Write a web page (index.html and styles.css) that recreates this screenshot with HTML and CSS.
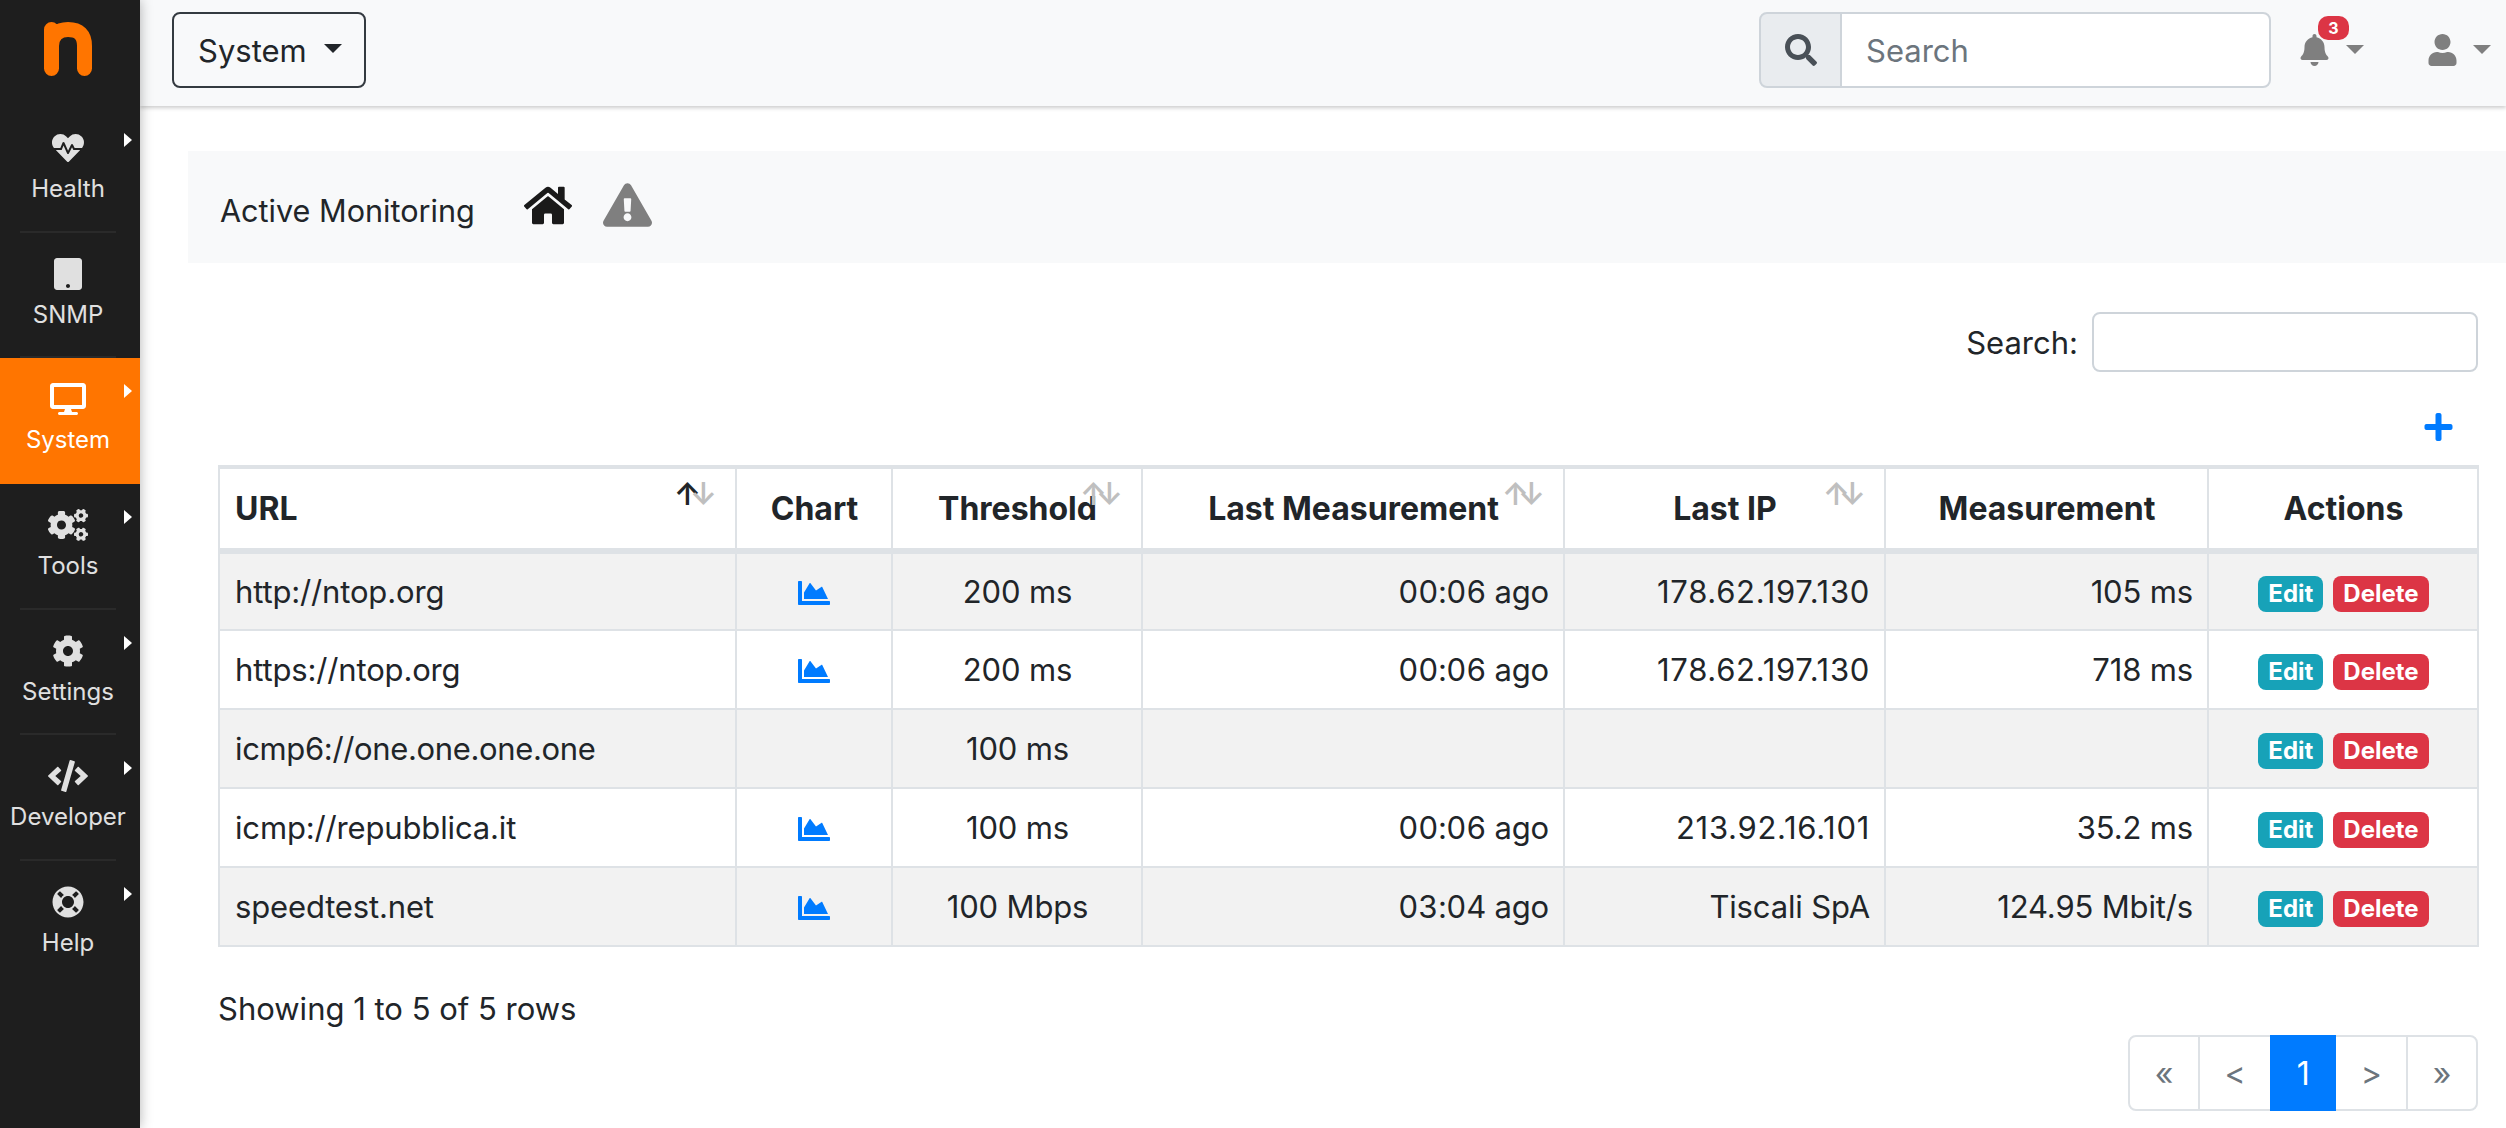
FILE: index.html
```html
<!DOCTYPE html>
<html lang="en">
<head>
<meta charset="utf-8">
<title>Active Monitoring</title>
<link rel="stylesheet" href="styles.css">
</head>
<body>
<svg class="sprite" aria-hidden="true">
  <symbol id="i-heart" viewBox="0 0 512 512"><path d="M320.2 243.8l-49.7 99.4c-6 12.1-23.4 11.7-28.9-.6l-56.9-126.3-30 71.7H60.6l182.5 186.5c7.1 7.3 18.6 7.3 25.7 0L451.4 288H342.3l-22.1-44.2zM473.7 73.9l-2.4-2.5c-51.5-52.6-135.8-52.6-187.4 0L256 100l-27.9-28.5c-51.5-52.7-135.9-52.7-187.4 0l-2.4 2.4C-10.4 123.7-12.5 203 31 256h102.4l35.9-86.2c5.4-12.9 23.6-13.2 29.4-.4l58.2 129.3 49-97.9c5.9-11.8 22.7-11.8 28.6 0l27.6 55.2H481c43.5-53 41.4-132.3-7.3-182.1z"/></symbol>
  <symbol id="i-tablet" viewBox="0 0 448 512"><path d="M400 0H48C21.5 0 0 21.5 0 48v416c0 26.5 21.5 48 48 48h352c26.5 0 48-21.5 48-48V48c0-26.5-21.5-48-48-48zM224 480c-17.7 0-32-14.3-32-32s14.3-32 32-32 32 14.3 32 32-14.3 32-32 32z"/></symbol>
  <symbol id="i-desktop" viewBox="0 0 576 512"><path d="M528 0H48C21.5 0 0 21.5 0 48v320c0 26.5 21.5 48 48 48h192l-16 48h-72c-13.3 0-24 10.7-24 24s10.7 24 24 24h272c13.3 0 24-10.7 24-24s-10.7-24-24-24h-72l-16-48h192c26.5 0 48-21.5 48-48V48c0-26.5-21.5-48-48-48zm-16 352H64V64h448v288z"/></symbol>
  <symbol id="i-cogs" viewBox="0 0 640 512"><path d="M512.1 191l-8.2 14.3c-3 5.3-9.4 7.5-15.1 5.4-11.8-4.4-22.6-10.7-32.1-18.6-4.6-3.8-5.8-10.5-2.8-15.7l8.2-14.3c-6.9-8-12.3-17.3-15.9-27.4h-16.5c-6 0-11.2-4.3-12.2-10.3-2-12-2.1-24.6 0-37.1 1-6 6.2-10.4 12.2-10.4h16.5c3.6-10.1 9-19.4 15.9-27.4l-8.2-14.3c-3-5.2-1.9-11.9 2.8-15.7 9.5-7.9 20.4-14.2 32.1-18.6 5.7-2.1 12.1.1 15.1 5.4l8.2 14.3c10.5-1.9 21.2-1.9 31.7 0L552 6.3c3-5.3 9.4-7.5 15.1-5.4 11.8 4.4 22.6 10.7 32.1 18.6 4.6 3.8 5.8 10.5 2.8 15.7l-8.2 14.3c6.9 8 12.3 17.3 15.9 27.4h16.5c6 0 11.2 4.3 12.2 10.3 2 12 2.1 24.6 0 37.1-1 6-6.2 10.4-12.2 10.4h-16.5c-3.6 10.1-9 19.4-15.9 27.4l8.2 14.3c3 5.2 1.9 11.9-2.8 15.7-9.5 7.9-20.4 14.2-32.1 18.6-5.7 2.1-12.1-.1-15.1-5.4l-8.2-14.3c-10.4 1.9-21.2 1.9-31.7 0zm-10.5-58.8c38.5 29.6 82.4-14.3 52.8-52.8-38.5-29.7-82.4 14.3-52.8 52.8zM386.3 286.1l33.7 16.8c10.1 5.8 14.5 18.1 10.5 29.1-8.9 24.2-26.4 46.4-42.6 65.8-7.4 8.9-20.2 11.1-30.3 5.3l-29.1-16.8c-16 13.7-34.6 24.6-54.9 31.7v33.6c0 11.6-8.3 21.6-19.7 23.6-24.6 4.2-50.4 4.4-75.9 0-11.5-2-20-11.9-20-23.6V418c-20.3-7.2-38.9-18-54.9-31.7L74 403c-10 5.8-22.9 3.6-30.3-5.3-16.2-19.4-33.3-41.6-42.2-65.7-4-10.9.4-23.2 10.5-29.1l33.3-16.8c-3.9-20.9-3.9-42.4 0-63.4L12 205.8c-10.1-5.8-14.6-18.1-10.5-29 8.9-24.2 26-46.4 42.2-65.8 7.4-8.9 20.2-11.1 30.3-5.3l29.1 16.8c16-13.7 34.6-24.6 54.9-31.7V57.1c0-11.5 8.2-21.5 19.6-23.5 24.6-4.2 50.5-4.4 76-.1 11.5 2 20 11.9 20 23.6v33.6c20.3 7.2 38.9 18 54.9 31.7l29.1-16.8c10-5.8 22.9-3.6 30.3 5.3 16.2 19.4 33.2 41.6 42.1 65.8 4 10.9.1 23.2-10 29.1l-33.7 16.8c3.9 21 3.9 42.5 0 63.5zm-117.6 21.1c59.2-77-28.7-164.9-105.7-105.7-59.2 77 28.7 164.9 105.7 105.7zm243.4 182.7l-8.2 14.3c-3 5.3-9.4 7.5-15.1 5.4-11.8-4.4-22.6-10.7-32.1-18.6-4.6-3.8-5.8-10.5-2.8-15.7l8.2-14.3c-6.9-8-12.3-17.3-15.9-27.4h-16.5c-6 0-11.2-4.3-12.2-10.3-2-12-2.1-24.6 0-37.1 1-6 6.2-10.4 12.2-10.4h16.5c3.6-10.1 9-19.4 15.9-27.4l-8.2-14.3c-3-5.2-1.9-11.9 2.8-15.7 9.5-7.9 20.4-14.2 32.1-18.6 5.7-2.1 12.1.1 15.1 5.4l8.2 14.3c10.5-1.9 21.2-1.9 31.7 0l8.2-14.3c3-5.3 9.4-7.5 15.1-5.4 11.8 4.4 22.6 10.7 32.1 18.6 4.6 3.8 5.8 10.5 2.8 15.7l-8.2 14.3c6.9 8 12.3 17.3 15.9 27.4h16.5c6 0 11.2 4.3 12.2 10.3 2 12 2.1 24.6 0 37.1-1 6-6.2 10.4-12.2 10.4h-16.5c-3.6 10.1-9 19.4-15.9 27.4l8.2 14.3c3 5.2 1.9 11.9-2.8 15.7-9.5 7.9-20.4 14.2-32.1 18.6-5.7 2.1-12.1-.1-15.1-5.4l-8.2-14.3c-10.4 1.9-21.2 1.9-31.7 0zM501.6 431c38.5 29.6 82.4-14.3 52.8-52.8-38.5-29.6-82.4 14.3-52.8 52.8z"/></symbol>
  <symbol id="i-cog" viewBox="0 0 512 512"><path d="M487.4 315.7l-42.6-24.6c4.3-23.2 4.3-47 0-70.2l42.6-24.6c4.9-2.8 7.1-8.6 5.5-14-11.1-35.6-30-67.8-54.7-94.6-3.8-4.1-10-5.1-14.8-2.3L380.8 110c-17.9-15.4-38.5-27.3-60.8-35.1V25.8c0-5.6-3.9-10.5-9.4-11.7-36.7-8.2-74.3-7.8-109.2 0-5.5 1.2-9.4 6.1-9.4 11.7V75c-22.2 7.9-42.8 19.8-60.8 35.1L88.7 85.5c-4.9-2.8-11-1.9-14.8 2.3-24.7 26.7-43.6 58.9-54.7 94.6-1.7 5.4.6 11.2 5.5 14L67.3 221c-4.3 23.2-4.3 47 0 70.2l-42.6 24.6c-4.9 2.8-7.1 8.6-5.5 14 11.1 35.6 30 67.8 54.7 94.6 3.8 4.1 10 5.1 14.8 2.3l42.6-24.6c17.9 15.4 38.5 27.3 60.8 35.1v49.2c0 5.6 3.9 10.5 9.4 11.7 36.7 8.2 74.3 7.8 109.2 0 5.5-1.2 9.4-6.1 9.4-11.7v-49.2c22.2-7.9 42.8-19.8 60.8-35.1l42.6 24.6c4.9 2.8 11 1.9 14.8-2.3 24.7-26.7 43.6-58.9 54.7-94.6 1.5-5.5-.7-11.3-5.6-14.1zM256 336c-44.1 0-80-35.9-80-80s35.9-80 80-80 80 35.9 80 80-35.9 80-80 80z"/></symbol>
  <symbol id="i-code" viewBox="0 0 640 512"><path d="M278.9 511.5l-61-17.7c-6.4-1.8-10-8.5-8.2-14.9L346.2 8.7c1.8-6.4 8.5-10 14.9-8.2l61 17.7c6.4 1.8 10 8.5 8.2 14.9L293.8 503.3c-1.9 6.4-8.5 10.1-14.9 8.2zm-114-112.2l43.5-46.4c4.6-4.9 4.3-12.7-.8-17.2L117 256l90.6-79.7c5.1-4.5 5.5-12.3.8-17.2l-43.5-46.4c-4.5-4.8-12.1-5.1-17-.5L3.8 247.2c-5.1 4.7-5.1 12.8 0 17.5l144.1 135.1c4.9 4.6 12.5 4.4 17-.5zm327.2.6l144.1-135.1c5.1-4.7 5.1-12.8 0-17.5L492.1 112.1c-4.8-4.5-12.4-4.3-17 .5L431.6 159c-4.6 4.9-4.3 12.7.8 17.2L523 256l-90.6 79.7c-5.1 4.5-5.5 12.3-.8 17.2l43.5 46.4c4.5 4.9 12.1 5.1 17 .6z"/></symbol>
  <symbol id="i-ring" viewBox="0 0 512 512"><path d="M256 8C119.033 8 8 119.033 8 256s111.033 248 248 248 248-111.033 248-248S392.967 8 256 8zm173.696 119.559l-63.399 63.399c-10.987-18.559-26.67-34.252-45.255-45.255l63.399-63.399a218.396 218.396 0 0 1 45.255 45.255zM256 352c-53.019 0-96-42.981-96-96s42.981-96 96-96 96 42.981 96 96-42.981 96-96 96zM127.559 82.304l63.399 63.399c-18.559 10.987-34.252 26.67-45.255 45.255l-63.399-63.399a218.372 218.372 0 0 1 45.255-45.255zM82.304 384.441l63.399-63.399c10.987 18.559 26.67 34.252 45.255 45.255l-63.399 63.399a218.396 218.396 0 0 1-45.255-45.255zm302.137 45.255l-63.399-63.399c18.559-10.987 34.252-26.67 45.255-45.255l63.399 63.399a218.403 218.403 0 0 1-45.255 45.255z"/></symbol>
  <symbol id="i-search" viewBox="0 0 512 512"><path d="M505 442.7L405.3 343c-4.5-4.5-10.6-7-17-7H372c27.6-35.3 44-79.7 44-128C416 93.1 322.9 0 208 0S0 93.1 0 208s93.1 208 208 208c48.3 0 92.7-16.4 128-44v16.3c0 6.4 2.5 12.5 7 17l99.7 99.7c9.4 9.4 24.6 9.4 33.9 0l28.3-28.3c9.4-9.4 9.4-24.6.1-34zM208 336c-70.7 0-128-57.2-128-128 0-70.7 57.2-128 128-128 70.7 0 128 57.2 128 128 0 70.7-57.2 128-128 128z"/></symbol>
  <symbol id="i-bell" viewBox="0 0 448 512"><path d="M224 512c35.32 0 63.97-28.65 63.97-64H160.03c0 35.35 28.65 64 63.97 64zm215.39-149.71c-19.32-20.76-55.47-51.99-55.47-154.29 0-77.7-54.48-139.9-127.94-155.16V32c0-17.67-14.32-32-31.98-32s-31.98 14.33-31.98 32v20.84C118.56 68.1 64.08 130.3 64.08 208c0 102.3-36.15 133.53-55.47 154.29-6 6.45-8.66 14.16-8.61 21.71.11 16.4 12.98 32 32.1 32h383.8c19.12 0 32-15.6 32.1-32 .05-7.55-2.61-15.27-8.61-21.71z"/></symbol>
  <symbol id="i-user" viewBox="0 0 448 512"><path d="M224 256c70.7 0 128-57.3 128-128S294.7 0 224 0 96 57.3 96 128s57.3 128 128 128zm89.6 32h-16.7c-22.2 10.2-46.9 16-72.9 16s-50.6-5.8-72.9-16h-16.7C60.2 288 0 348.2 0 422.4V464c0 26.5 21.5 48 48 48h352c26.5 0 48-21.5 48-48v-41.6c0-74.2-60.2-134.4-134.4-134.4z"/></symbol>
  <symbol id="i-home" viewBox="0 0 576 512"><path d="M280.37 148.26L96 300.11V464a16 16 0 0 0 16 16l112.06-.29a16 16 0 0 0 15.92-16V368a16 16 0 0 1 16-16h64a16 16 0 0 1 16 16v95.64a16 16 0 0 0 16 16.05L464 480a16 16 0 0 0 16-16V300L295.67 148.26a12.19 12.19 0 0 0-15.3 0zM571.6 251.47L488 182.56V44.05a12 12 0 0 0-12-12h-56a12 12 0 0 0-12 12v72.61L318.47 43a48 48 0 0 0-61 0L4.34 251.47a12 12 0 0 0-1.6 16.9l25.5 31A12 12 0 0 0 45.15 301l235.22-193.74a12.19 12.19 0 0 1 15.3 0L530.9 301a12 12 0 0 0 16.9-1.6l25.5-31a12 12 0 0 0-1.7-16.93z"/></symbol>
  <symbol id="i-warn" viewBox="0 0 576 512"><path d="M569.517 440.013C587.975 472.007 564.806 512 527.94 512H48.054c-36.937 0-59.999-40.055-41.577-71.987L246.423 23.985c18.467-32.009 64.72-31.951 83.154 0l239.94 416.028zM288 354c-25.405 0-46 20.595-46 46s20.595 46 46 46 46-20.595 46-46-20.595-46-46-46zm-43.673-165.346l7.418 136c.347 6.364 5.609 11.346 11.982 11.346h48.546c6.373 0 11.635-4.982 11.982-11.346l7.418-136c.375-6.874-5.098-12.654-11.982-12.654h-63.383c-6.884 0-12.356 5.78-11.981 12.654z"/></symbol>
  <symbol id="i-chart" viewBox="0 0 512 512"><path d="M500 384c6.6 0 12 5.4 12 12v40c0 6.6-5.4 12-12 12H12c-6.6 0-12-5.4-12-12V76c0-6.6 5.4-12 12-12h40c6.6 0 12 5.4 12 12v308h436zM372.7 159.5L288 216l-85.3-113.7c-5.1-6.8-15.5-6.3-19.9 1L96 248v104h384l-89.9-187.8c-3.2-6.5-11.4-8.7-17.4-4.7z"/></symbol>
  <symbol id="i-plus" viewBox="0 0 448 512"><path d="M416 208H272V64c0-17.67-14.33-32-32-32h-32c-17.67 0-32 14.33-32 32v144H32c-17.67 0-32 14.33-32 32v32c0 17.67 14.33 32 32 32h144v144c0 17.67 14.33 32 32 32h32c17.67 0 32-14.33 32-32V304h144c17.67 0 32-14.33 32-32v-32c0-17.67-14.33-32-32-32z"/></symbol>
</svg>

<div class="app">
  <nav class="sidebar">
    <div class="logo-box">
      <svg class="logo" viewBox="0 0 48 54"><path d="M7.500 7.500V46.500M7.500 24C7.500 13 14 7.500 24 7.500C35 7.500 40.500 13 40.500 24V46.500"/></svg>
    </div>
    <a class="side-item has-sub"><svg class="side-icon"><use href="#i-heart"/></svg><span class="side-label">Health</span></a>
    <a class="side-item"><svg class="side-icon"><use href="#i-tablet"/></svg><span class="side-label">SNMP</span></a>
    <a class="side-item has-sub active"><svg class="side-icon"><use href="#i-desktop"/></svg><span class="side-label">System</span></a>
    <a class="side-item has-sub"><svg class="side-icon"><use href="#i-cogs"/></svg><span class="side-label">Tools</span></a>
    <a class="side-item has-sub"><svg class="side-icon"><use href="#i-cog"/></svg><span class="side-label">Settings</span></a>
    <a class="side-item has-sub"><svg class="side-icon"><use href="#i-code"/></svg><span class="side-label">Developer</span></a>
    <a class="side-item has-sub"><svg class="side-icon"><use href="#i-ring"/></svg><span class="side-label">Help</span></a>
  </nav>

  <div class="page">
    <header class="topbar">
      <button class="iface-btn">System<span class="caret caret-dark"></span></button>
      <div class="top-right">
        <div class="search-group">
          <span class="search-addon"><svg class="search-icon"><use href="#i-search"/></svg></span>
          <input class="search-input" placeholder="Search">
        </div>
        <div class="top-icon bell-wrap">
          <svg class="bell"><use href="#i-bell"/></svg>
          <span class="bell-badge">3</span>
          <span class="caret caret-grey"></span>
        </div>
        <div class="top-icon user-wrap">
          <svg class="bell"><use href="#i-user"/></svg>
          <span class="caret caret-grey"></span>
        </div>
      </div>
    </header>

    <main class="content">
      <div class="crumb">
        <span class="crumb-title">Active Monitoring</span>
        <svg class="crumb-home"><use href="#i-home"/></svg>
        <svg class="crumb-warn"><use href="#i-warn"/></svg>
      </div>

      <div class="table-area">
        <label class="filter">Search:<input class="filter-input"></label>
        <div class="add-row"><svg class="add-icon"><use href="#i-plus"/></svg></div>

        <table class="grid">
          <colgroup>
            <col class="c-url"><col class="c-chart"><col class="c-thr"><col class="c-last"><col class="c-ip"><col class="c-meas"><col class="c-act">
          </colgroup>
          <thead>
            <tr>
              <th class="left sortable">URL<span class="arr arr-up on">↑</span><span class="arr arr-down">↓</span></th>
              <th>Chart</th>
              <th class="sortable">Threshold<span class="arr arr-up">↑</span><span class="arr arr-down">↓</span></th>
              <th class="sortable">Last Measurement<span class="arr arr-up">↑</span><span class="arr arr-down">↓</span></th>
              <th class="sortable">Last IP<span class="arr arr-up">↑</span><span class="arr arr-down">↓</span></th>
              <th>Measurement</th>
              <th>Actions</th>
            </tr>
          </thead>
          <tbody>
            <tr>
              <td class="left">http://ntop.org</td>
              <td class="center"><svg class="chart-icon"><use href="#i-chart"/></svg></td>
              <td class="center">200 ms</td>
              <td class="right time">00:06 ago</td>
              <td class="right ip">178.62.197.130</td>
              <td class="right">105 ms</td>
              <td class="center"><span class="tag tag-edit">Edit</span><span class="tag tag-del">Delete</span></td>
            </tr>
            <tr>
              <td class="left">https://ntop.org</td>
              <td class="center"><svg class="chart-icon"><use href="#i-chart"/></svg></td>
              <td class="center">200 ms</td>
              <td class="right time">00:06 ago</td>
              <td class="right ip">178.62.197.130</td>
              <td class="right">718 ms</td>
              <td class="center"><span class="tag tag-edit">Edit</span><span class="tag tag-del">Delete</span></td>
            </tr>
            <tr>
              <td class="left url-long">icmp6://one.one.one.one</td>
              <td class="center"></td>
              <td class="center">100 ms</td>
              <td class="right"></td>
              <td class="right"></td>
              <td class="right"></td>
              <td class="center"><span class="tag tag-edit">Edit</span><span class="tag tag-del">Delete</span></td>
            </tr>
            <tr>
              <td class="left">icmp://repubblica.it</td>
              <td class="center"><svg class="chart-icon"><use href="#i-chart"/></svg></td>
              <td class="center">100 ms</td>
              <td class="right time">00:06 ago</td>
              <td class="right ip">213.92.16.101</td>
              <td class="right">35.2 ms</td>
              <td class="center"><span class="tag tag-edit">Edit</span><span class="tag tag-del">Delete</span></td>
            </tr>
            <tr>
              <td class="left">speedtest.net</td>
              <td class="center"><svg class="chart-icon"><use href="#i-chart"/></svg></td>
              <td class="center">100 Mbps</td>
              <td class="right time">03:04 ago</td>
              <td class="right">Tiscali SpA</td>
              <td class="right">124.95 Mbit/s</td>
              <td class="center"><span class="tag tag-edit">Edit</span><span class="tag tag-del">Delete</span></td>
            </tr>
          </tbody>
        </table>

        <div class="showing">Showing 1 to 5 of 5 rows</div>
        <div class="pager">
          <span class="pg pg-first">«</span>
          <span class="pg">&lt;</span>
          <span class="pg pg-on">1</span>
          <span class="pg">&gt;</span>
          <span class="pg pg-last">»</span>
        </div>
      </div>
    </main>
  </div>
</div>
</body>
</html>
```
FILE: styles.css
```css
* { box-sizing: border-box; }
html, body { margin: 0; height: 100%; overflow: hidden; }
body { font-family: Inter, "Liberation Sans", sans-serif; font-size: 31px; color: #212529; background: #fff; }
.sprite { display: none; }
.app { display: flex; height: 1128px; }

/* sidebar */
.sidebar { width: 140px; flex: none; background: #1e1e1e; box-shadow: 0 0 12px rgba(0,0,0,.3); position: relative; z-index: 3; }
.logo-box { height: 107px; display: flex; justify-content: center; align-items: flex-start; padding: 22px 4px 0 0; }
.logo { width: 48px; height: 54px; fill: none; stroke: #ff7500; stroke-width: 15; stroke-linecap: round; }
.side-item { display: flex; flex-direction: column; align-items: center; height: 125.67px; padding-top: 25px; padding-right: 4px; color: #e0e0e0; position: relative; }
.side-item::after { content: ""; position: absolute; left: 20px; right: 24px; bottom: 0; height: 2px; background: #2a2a2a; }
.side-item.active { background: #ff7500; color: #fff; }
.side-item.active::after, .side-item:last-child::after { display: none; }
.side-item.has-sub::before { content: ""; position: absolute; left: 124px; top: 26px; border-left: 8px solid #fff; border-top: 7px solid transparent; border-bottom: 7px solid transparent; }
.side-icon { width: 40px; height: 32px; fill: currentColor; display: block; }
.side-label { font-size: 24px; line-height: 29px; margin-top: 10px; white-space: nowrap; }

/* top bar */
.page { flex: 1; min-width: 0; display: flex; flex-direction: column; }
.topbar { height: 106px; flex: none; background: #f8f9fa; box-shadow: 0 2px 4px rgba(0,0,0,.2); display: flex; align-items: flex-start; justify-content: space-between; padding: 12px 14px 0 32px; position: relative; z-index: 2; }
.iface-btn { height: 76px; width: 194px; border: 2px solid #343a40; border-radius: 8px; background: transparent; font: inherit; color: #212529; display: flex; align-items: center; padding: 0 0 0 24px; }
.caret { display: inline-block; border-top: 9px solid; border-left: 9px solid transparent; border-right: 9px solid transparent; }
.caret-dark { color: #212529; margin-left: 17px; margin-top: -4px; }
.caret-grey { color: #7f7f7f; position: absolute; top: 45px; }
.top-right { display: flex; align-items: flex-start; }
.search-group { display: flex; width: 512px; height: 76px; }
.search-addon { width: 83px; flex: none; background: #e9ecef; border: 2px solid #ced4da; border-radius: 8px 0 0 8px; display: flex; align-items: center; justify-content: center; }
.search-icon { width: 32px; height: 32px; fill: #495057; }
.search-input { flex: 1; min-width: 0; margin-left: -2px; background: #fff; border: 2px solid #ced4da; border-radius: 0 8px 8px 0; font: inherit; padding: 0 24px; outline: none; color: #495057; }
.search-input::placeholder { color: #6c757d; opacity: 1; }
.top-icon { position: relative; height: 76px; }
.bell-wrap { width: 128px; margin-left: 29px; }
.user-wrap { width: 64px; margin-left: 0; }
.bell { width: 29px; height: 32px; fill: #7f7f7f; position: absolute; left: 0; top: 22px; }
.bell-badge { position: absolute; left: 18px; top: 4px; width: 31px; height: 24px; border-radius: 10px; background: #dc3545; color: #fff; font-size: 16px; font-weight: 700; line-height: 24px; text-align: center; }
.bell-wrap .caret-grey { left: 46px; top: 33px; }
.user-wrap .caret-grey { left: 45px; top: 33px; }

/* content */
.content { flex: 1; min-height: 0; padding-left: 48px; }
.crumb { margin-top: 45px; height: 112px; background: #f8f9fa; display: flex; align-items: center; padding-left: 32px; }
.crumb-title { white-space: nowrap; font-size: 30.6px; margin-top: 7px; }
.crumb-home { width: 48px; height: 43px; fill: #1a1a1a; margin-left: 49px; margin-top: -4px; }
.crumb-warn { width: 49px; height: 44px; fill: #7f7f7f; margin-left: 31px; margin-top: -4px; }
.table-area { padding: 0 28px 0 30px; }
.filter { display: flex; justify-content: flex-end; align-items: center; margin-top: 49px; height: 60px; }
.filter-input { width: 386px; height: 60px; margin-left: 14px; border: 2px solid #ced4da; border-radius: 8px; background: #fff; }
.add-row { display: flex; justify-content: flex-end; margin-top: 41px; padding-right: 25px; height: 28px; }
.add-icon { width: 29px; height: 32px; fill: #007bff; margin-top: -2px; }

/* table */
.grid { width: 2259px; margin-top: 24px; border-collapse: collapse; table-layout: fixed; border: 2px solid #dee2e6; }
.c-url { width: 517px; } .c-chart { width: 156px; } .c-thr { width: 250px; } .c-last { width: 422px; }
.c-ip { width: 321px; } .c-meas { width: 323px; } .c-act { width: 270px; }
.grid th, .grid td { border: 2px solid #dee2e6; padding: 0 14px 0 15px; white-space: nowrap; vertical-align: middle; }
.grid th { height: 84px; font-size: 32px; font-weight: 700; text-align: center; border-top-width: 4px; border-bottom-width: 6px; position: relative; }
.grid td { height: 79px; letter-spacing: -0.15px; }
.grid tbody tr:nth-child(odd) td { background: #f2f2f2; }
.grid th.left, .grid td.left { text-align: left; }
.grid td.center { text-align: center; }
.grid td.right { text-align: right; }
.grid td.time { font-feature-settings: "tnum"; }
.grid td.ip { letter-spacing: 0.7px; }
.grid td.url-long { letter-spacing: -0.35px; }
.arr { position: absolute; top: 9px; font-size: 31px; line-height: 32px; font-weight: 600; color: #bfbfbf; }
.arr-up { right: 34px; }
.arr-down { right: 18px; }
.arr.on { color: #212529; }
.chart-icon { width: 32px; height: 32px; fill: #007bff; vertical-align: middle; display: inline-block; margin: -3px 1px 0 0; }
.tag { display: inline-block; height: 36px; line-height: 36px; padding: 0 10px; border-radius: 8px; color: #fff; font-size: 24px; font-weight: 700; letter-spacing: 0; vertical-align: middle; margin-top: 3px; }
.tag-edit { background: #17a2b8; }
.tag-del { background: #dc3545; margin-left: 10px; }

.showing { margin-top: 44px; line-height: 36px; }
.pager { display: flex; justify-content: flex-end; margin-top: 8px; font-size: 32px; }
.pg { height: 76px; padding: 0 24.5px; display: flex; align-items: center; justify-content: center; border: 2px solid #dee2e6; margin-left: -2px; color: #6c757d; background: #fff; }
.pg-first { border-radius: 8px 0 0 8px; }
.pg-last { border-radius: 0 8px 8px 0; }
.pg-on { background: #007bff; border-color: #007bff; color: #fff; position: relative; }
```
